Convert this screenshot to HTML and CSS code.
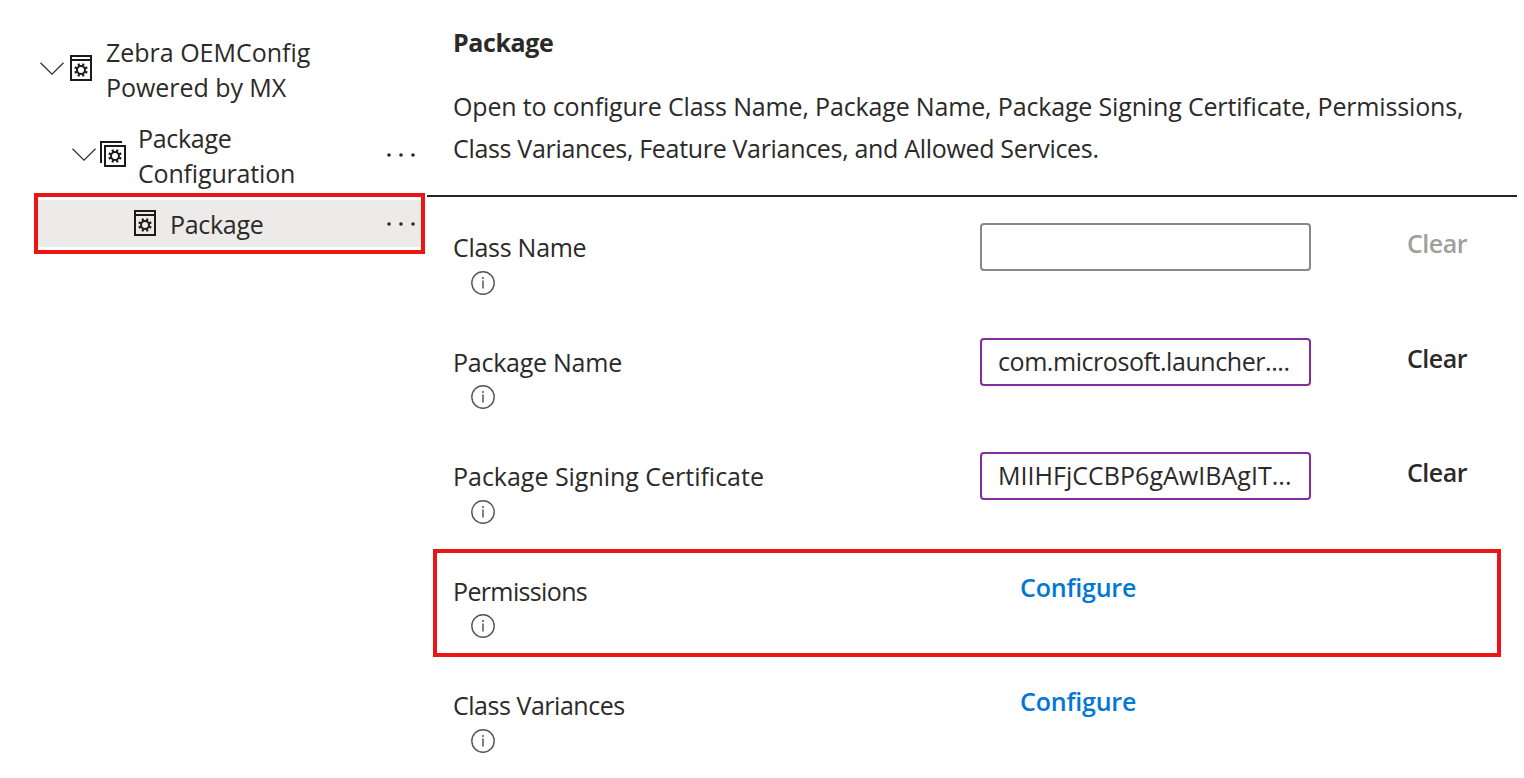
FILE: index.html
```html
<!DOCTYPE html>
<html lang="en">
<head>
<meta charset="utf-8">
<title>Package</title>
<link rel="stylesheet" href="styles.css">
</head>
<body>
<svg width="0" height="0" class="defs" aria-hidden="true">
  <symbol id="gear" viewBox="-8 -8 16 16">
    <circle r="4" fill="none" stroke="currentColor" stroke-width="2"/>
    <path d="M1.8 -4.2L2.6 -6.3M4.2 -1.8L6.3 -2.6M4.2 1.8L6.3 2.6M1.8 4.2L2.6 6.3M-1.8 4.2L-2.6 6.3M-4.2 1.8L-6.3 2.6M-4.2 -1.8L-6.3 -2.6M-1.8 -4.2L-2.6 -6.3" stroke="currentColor" stroke-width="2.2"/>
  </symbol>
  <symbol id="app" viewBox="0 0 22 26">
    <path d="M1 1H21V25H1ZM1 5H21" fill="none" stroke="currentColor" stroke-width="2"/>
    <use href="#gear" x="3" y="7" width="16" height="16"/>
  </symbol>
  <symbol id="apps" viewBox="0 0 26 26">
    <path d="M1 22V1H22M5 5H25V25H5Z" fill="none" stroke="currentColor" stroke-width="2"/>
    <use href="#gear" x="7" y="7" width="16" height="16"/>
  </symbol>
  <symbol id="chevron" viewBox="0 0 24 13">
    <path d="M.5 .7L12 12.1L23.5 .7" fill="none" stroke="currentColor" stroke-width="1.3"/>
  </symbol>
  <symbol id="dots" viewBox="0 0 30 6">
    <g fill="currentColor"><circle cx="3" cy="3" r="1.8"/><circle cx="15" cy="3" r="1.8"/><circle cx="27" cy="3" r="1.8"/></g>
  </symbol>
  <symbol id="info" viewBox="0 0 24 24">
    <circle cx="12" cy="12" r="11.2" fill="none" stroke="currentColor" stroke-width="1.4"/>
    <path d="M12 9.6V17.5" stroke="currentColor" stroke-width="1.5"/>
    <circle cx="12" cy="7" r="1" fill="currentColor"/>
  </symbol>
</svg>
<div class="page">
  <nav class="tree">
    <div class="node root">
      <svg class="chevron"><use href="#chevron"/></svg>
      <svg class="app"><use href="#app"/></svg>
      <div class="name"><span class="t-zebra">Zebra OEMConfig</span><span class="t-powered">Powered by MX</span></div>
    </div>
    <div class="node child">
      <svg class="chevron"><use href="#chevron"/></svg>
      <svg class="apps"><use href="#apps"/></svg>
      <div class="name"><span class="t-package">Package</span><span class="t-configuration">Configuration</span></div>
      <svg class="dots"><use href="#dots"/></svg>
    </div>
    <div class="selected">
      <div class="node leaf">
        <svg class="app"><use href="#app"/></svg>
        <div class="name"><span class="t-package">Package</span></div>
        <svg class="dots"><use href="#dots"/></svg>
      </div>
    </div>
  </nav>
  <main class="main">
    <header class="intro">
      <h1 class="title">Package</h1>
      <p class="desc"><span class="t-desc1">Open to configure Class Name, Package Name, Package Signing Certificate, Permissions,</span><span class="t-desc2">Class Variances, Feature Variances, and Allowed Services.</span></p>
    </header>
    <section class="rows">
      <div class="row">
        <div class="field"><span class="label t-classname">Class Name</span><svg class="info"><use href="#info"/></svg></div>
        <div class="input"></div>
        <span class="clear disabled">Clear</span>
      </div>
      <div class="row">
        <div class="field"><span class="label t-packagename">Package Name</span><svg class="info"><use href="#info"/></svg></div>
        <div class="input filled"><span class="t-launcher">com.microsoft.launcher....</span></div>
        <span class="clear">Clear</span>
      </div>
      <div class="row">
        <div class="field"><span class="label t-cert">Package Signing Certificate</span><svg class="info"><use href="#info"/></svg></div>
        <div class="input filled"><span class="t-miih">MIIHFjCCBP6gAwIBAgIT...</span></div>
        <span class="clear">Clear</span>
      </div>
      <div class="row highlight">
        <div class="field"><span class="label t-perm">Permissions</span><svg class="info"><use href="#info"/></svg></div>
        <a class="configure">Configure</a>
      </div>
      <div class="row">
        <div class="field"><span class="label t-variances">Class Variances</span><svg class="info"><use href="#info"/></svg></div>
        <a class="configure">Configure</a>
      </div>
    </section>
  </main>
</div>
</body>
</html>
```
FILE: styles.css
```css
*, *::after { box-sizing: border-box; }
body { margin: 0; background: #fff; color: #2b2a29; font: 25px/35px "Open Sans", "Noto Sans", sans-serif; white-space: nowrap; }
svg { display: block; flex: none; }
.defs { position: absolute; }
.page { display: flex; width: 1524px; height: 778px; overflow: hidden; }

.tree { width: 427px; flex: none; padding-top: 35px; }
.node { display: flex; align-items: center; }
.name span { display: block; }
.root { height: 70px; padding-left: 40px; }
.child { height: 70px; margin-top: 16px; padding-left: 72px; }
.chevron { width: 24px; height: 13px; margin-bottom: 3px; color: #333; }
.app { width: 22px; height: 26px; margin: 0 14px 0 6px; color: #1b1b1b; }
.root .app, .apps { margin-bottom: 4px; }
.apps { width: 26px; height: 26px; margin-left: 4px; margin-right: 12px; color: #1b1b1b; }
.dots { width: 30px; height: 6px; margin-left: auto; color: #2b2a29; }
.child .dots { margin-right: 11px; margin-bottom: 2px; }
.selected { width: 391px; height: 61px; margin: 2px 0 0 34px; border: 4px solid #ec1515; padding: 3px 0; }
.leaf { height: 47px; background: #edebe9; padding-left: 90px; padding-right: 5px; }
.leaf .name { padding-top: 2px; }
.leaf .app { margin-bottom: 1px; }

.main { flex: none; width: 1090px; }
.intro { height: 197px; border-bottom: 2px solid #252423; padding: 24px 0 0 26px; }
.title { margin: 0; font-size: 25px; line-height: 36px; font-weight: 700; letter-spacing: -.4px; }
.desc { margin: 25px 0 0; line-height: 42px; }
.desc span { display: block; }
.row { display: flex; height: 114.5px; padding: 26px 0 0 26px; position: relative; }
.field { width: 527px; flex: none; padding-top: 7px; }
.label { display: block; height: 35px; line-height: 35px; }
.info { width: 24px; height: 24px; margin: 5.7px 0 0 18px; color: #555; }
.input { width: 331px; height: 48px; border: 2px solid #8a8886; border-radius: 4px; padding-left: 16px; line-height: 43px; }
.filled { border-color: #852d9e; }
.clear { margin: 3px 0 0 96px; font-weight: 600; letter-spacing: -.5px; }
.disabled { color: #a19f9d; }
.configure { margin: 3px 0 0 40px; font-weight: 600; color: #0078d4; letter-spacing: -.2px; }
.highlight::after { content: ""; position: absolute; left: 6px; top: 8.5px; width: 1068px; height: 108px; border: 4px solid #ec1515; }

/* Tracking per string */
.t-zebra { letter-spacing: -.01px; }
.t-powered { letter-spacing: -.05px; }
.t-package { letter-spacing: -.3px; }
.t-configuration { letter-spacing: -.17px; }
.t-desc1 { letter-spacing: -.16px; }
.t-desc2 { letter-spacing: -.32px; }
.t-cert { letter-spacing: -.02px; }
.t-classname { letter-spacing: -.28px; }
.t-launcher { letter-spacing: -.44px; }
.t-packagename { letter-spacing: -.25px; }
.t-perm { letter-spacing: -.64px; }
.t-variances { letter-spacing: -.47px; }
.t-miih { letter-spacing: .03px; }
```
